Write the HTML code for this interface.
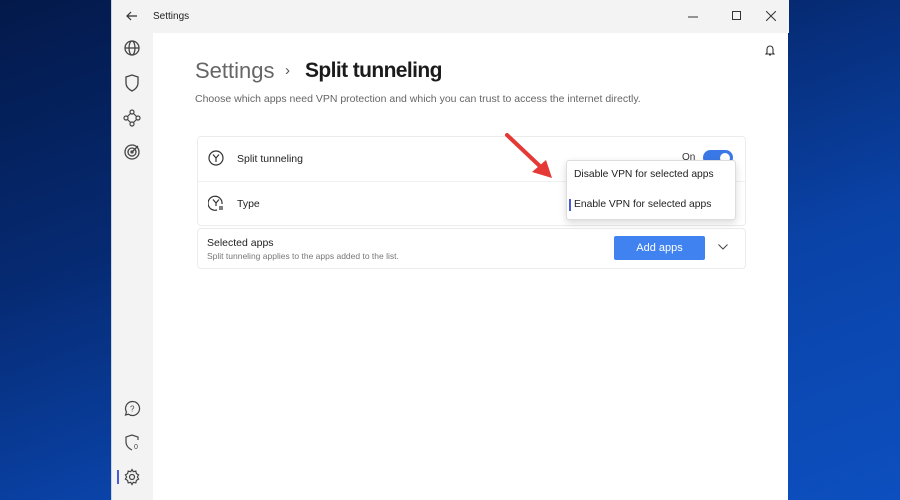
<!DOCTYPE html>
<html><head><meta charset="utf-8"><style>
*{margin:0;padding:0;box-sizing:border-box}
body{width:900px;height:500px;overflow:hidden;position:relative;font-family:"Liberation Sans",sans-serif;
background:linear-gradient(160deg,#03194a 0%,#062a72 35%,#0a43a8 65%,#0d4fbf 100%);}
.win{position:absolute;left:111px;top:0;width:677px;height:500px;background:#fff;border-left:1px solid #c9d3e6;}
.title{position:absolute;left:0;top:0;width:677px;height:33px;background:#f3f3f3;}
.side{position:absolute;left:0;top:33px;width:41px;height:467px;background:#f3f3f3;}
.t{position:absolute;white-space:nowrap}
.card{position:absolute;left:85px;width:549px;background:#fff;border:1px solid #ececec;border-radius:4px}
svg{position:absolute}
</style></head><body>
<div class="win">
 <div class="title">
  <svg style="left:14px;top:11px" width="12" height="10" viewBox="0 0 12 10"><path d="M11 5H1M5 1L1 5l4 4" stroke="#333" fill="none" stroke-width="1.2"/></svg>
  <div class="t" style="left:41px;top:11px;font-size:10px;color:#222">Settings</div>
  <svg style="left:576px;top:12px" width="10" height="10"><path d="M0 5h10" stroke="#333"/></svg>
  <svg style="left:620px;top:11px" width="10" height="10"><rect x="0.5" y="0.5" width="8" height="8" stroke="#333" fill="none"/></svg>
  <svg style="left:654px;top:11px" width="10" height="10"><path d="M0 0l10 10M10 0L0 10" stroke="#333"/></svg>
 </div>
 <div class="side">
  <svg style="left:11px;top:6px" width="18" height="18" viewBox="0 0 18 18" fill="none" stroke="#444" stroke-width="1.3"><circle cx="9" cy="9" r="7"/><ellipse cx="9" cy="9" rx="3" ry="7"/><path d="M2 9h14"/></svg>
  <svg style="left:12px;top:41px" width="16" height="18" viewBox="0 0 16 18" fill="none" stroke="#444" stroke-width="1.3"><path d="M8 1L2 3v6c0 4 3 6.5 6 8 3-1.5 6-4 6-8V3z"/></svg>
  <svg style="left:11px;top:76px" width="18" height="18" viewBox="0 0 18 18" fill="none" stroke="#444" stroke-width="1.2"><circle cx="9" cy="3" r="2"/><circle cx="3" cy="9" r="2"/><circle cx="15" cy="9" r="2"/><circle cx="9" cy="15" r="2"/><path d="M7.5 4.5L4.5 7.5M10.5 4.5l3 3M4.5 10.5l3 3M13.5 10.5l-3 3"/></svg>
  <svg style="left:11px;top:110px" width="18" height="18" viewBox="0 0 18 18" fill="none" stroke="#444" stroke-width="1.3"><circle cx="9" cy="9" r="7"/><circle cx="9" cy="9" r="4"/><circle cx="9" cy="9" r="1"/><path d="M9 9l6-6"/></svg>
  <svg style="left:12px;top:367px" width="17" height="17" viewBox="0 0 17 17" fill="none" stroke="#444" stroke-width="1.2"><path d="M8.5 1.5a7 7 0 1 1-4 12.7L1.5 15l1-3A7 7 0 0 1 8.5 1.5z"/><text x="6" y="11.5" font-size="8" fill="#444" stroke="none" font-family="Liberation Sans">?</text></svg>
  <svg style="left:12px;top:400px" width="17" height="18" viewBox="0 0 17 18" fill="none" stroke="#444" stroke-width="1.2"><path d="M14 7V4L8 2 2 4v5c0 4 3 6.5 6 8"/><text x="10" y="16" font-size="7" fill="#444" stroke="none" font-family="Liberation Sans">0</text></svg>
  <div style="position:absolute;left:5px;top:437px;width:2px;height:14px;background:#4a5bd8"></div>
  <svg style="left:11px;top:435px" width="18" height="18" viewBox="0 0 18 18" fill="none" stroke="#444" stroke-width="1.2"><circle cx="9" cy="9" r="2.5"/><path d="M9 1.5l1.3 2.2 2.5-.6.6 2.5 2.2 1.3-1.2 2.1 1.2 2.1-2.2 1.3-.6 2.5-2.5-.6L9 16.5l-1.3-2.2-2.5.6-.6-2.5-2.2-1.3L3.6 9 2.4 6.9l2.2-1.3.6-2.5 2.5.6z"/></svg>
 </div>
 <svg style="left:653px;top:44px" width="10" height="12" viewBox="0 0 10 12" fill="none" stroke="#333" stroke-width="1.1"><path d="M2 9V5a3 3 0 0 1 6 0v4l1 1H1zM4 11h2"/></svg>
 <div class="t" style="left:83px;top:58px;font-size:22px;color:#666">Settings</div>
 <div class="t" style="left:173px;top:62px;font-size:15px;color:#555">›</div>
 <div class="t" style="left:193px;top:59px;font-size:21px;color:#1b1b1b;font-weight:bold;letter-spacing:-0.6px">Split tunneling</div>
 <div class="t" style="left:83px;top:93px;font-size:10.5px;color:#666">Choose which apps need VPN protection and which you can trust to access the internet directly.</div>
 <div class="card" style="top:136px;height:90px;"></div>
 <div style="position:absolute;left:86px;top:181px;width:547px;height:1px;background:#f0f0f0"></div>
 <svg style="left:96px;top:150px" width="16" height="16" viewBox="0 0 16 16" fill="none" stroke="#333" stroke-width="1.2"><circle cx="8" cy="8" r="7"/><path d="M5 4.5L8 8l3-3.5M8 8v4"/></svg>
 <div class="t" style="left:125px;top:153px;font-size:10.5px;color:#222">Split tunneling</div>
 <svg style="left:96px;top:195px" width="16" height="16" viewBox="0 0 16 16" fill="none" stroke="#333" stroke-width="1.2"><path d="M14 9A7 7 0 1 0 9 15"/><path d="M5 4.5L8 8l3-3.5M8 8v3M11 12h4M11 14h4"/></svg>
 <div class="t" style="left:125px;top:198px;font-size:10.5px;color:#222">Type</div>
 <div class="t" style="left:570px;top:152px;font-size:10px;color:#333">On</div>
 <div style="position:absolute;left:591px;top:150px;width:30px;height:15px;border-radius:8px;background:#3b78e7"></div>
 <div style="position:absolute;left:608px;top:153px;width:10px;height:10px;border-radius:5px;background:#fff"></div>
 <div class="card" style="top:228px;height:41px;"></div>
 <div class="t" style="left:95px;top:237px;font-size:10.5px;color:#222">Selected apps</div>
 <div class="t" style="left:95px;top:251px;font-size:8.5px;color:#777">Split tunneling applies to the apps added to the list.</div>
 <div style="position:absolute;left:502px;top:236px;width:91px;height:24px;background:#3f82f0;border-radius:2px;color:#fff;font-size:11px;text-align:center;line-height:24px">Add apps</div>
 <svg style="left:606px;top:244px" width="10" height="6"><path d="M0.5 0.5l4.5 4.5 4.5-4.5" stroke="#444" fill="none"/></svg>
 <div style="position:absolute;left:454px;top:160px;width:170px;height:60px;background:#fff;border:1px solid #ddd;border-radius:3px;box-shadow:0 3px 8px rgba(0,0,0,.15)"></div>
 <div class="t" style="left:462px;top:169px;font-size:10.3px;color:#222">Disable VPN for selected apps</div>
 <div style="position:absolute;left:457px;top:199px;width:2px;height:12px;background:#4a5bd8"></div>
 <div class="t" style="left:462px;top:199px;font-size:10.3px;color:#222">Enable VPN for selected apps</div>
 <svg style="left:390px;top:130px" width="60" height="55" viewBox="0 0 60 55"><path d="M5 5L42 40" stroke="#e53935" stroke-width="4" stroke-linecap="round"/><path d="M50 48L30 42 44 30z" fill="#e53935"/></svg>
</div>
</body></html>
